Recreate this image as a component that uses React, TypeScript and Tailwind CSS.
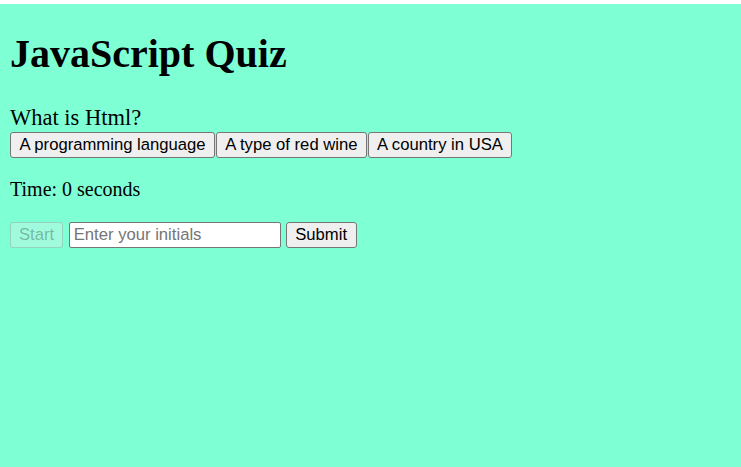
import React from "react";

const btn =
  "h-[26px] px-[8.5px] border border-[#767676] rounded-[3px] bg-[#efefef] text-black text-[16.67px] leading-[19px] [font-family:'Liberation_Sans',Arial,sans-serif] whitespace-nowrap";

export default function App() {
  return (
    <div className="min-h-screen w-full bg-[#7fffd4] border-t-4 border-white px-[10px] text-black [font-family:'Liberation_Serif','Times_New_Roman',serif]">
      <h1 className="mt-[26.5px] text-[40px] leading-[46px] font-bold">JavaScript Quiz</h1>
      <div className="mt-[28px] text-[22.5px] leading-[26px]">What is Html?</div>
      <div className="mt-[1px] flex gap-[0.5px]">
        <button className={btn}>A programming language</button>
        <button className={btn}>A type of red wine</button>
        <button className={btn}>A country in USA</button>
      </div>
      <div className="mt-[20px] text-[20px] leading-[23px]">Time: 0 seconds</div>
      <div className="mt-[21px] flex items-center">
        <button
          disabled
          className="h-[26px] px-[8px] border border-[rgba(118,118,118,0.3)] rounded-[3px] bg-[rgba(239,239,239,0.3)] text-[rgba(16,16,16,0.3)] text-[16.67px] leading-[19px] [font-family:'Liberation_Sans',Arial,sans-serif]"
        >
          Start
        </button>
        <input
          placeholder="Enter your initials"
          className="ml-[5.5px] w-[212px] h-[26px] px-[4px] border border-[#767676] rounded-[2px] bg-white text-[16.67px] placeholder:text-[#757575] outline-none [font-family:'Liberation_Sans',Arial,sans-serif]"
        />
        <button className={btn + " ml-[5px]"}>Submit</button>
      </div>
    </div>
  );
}
